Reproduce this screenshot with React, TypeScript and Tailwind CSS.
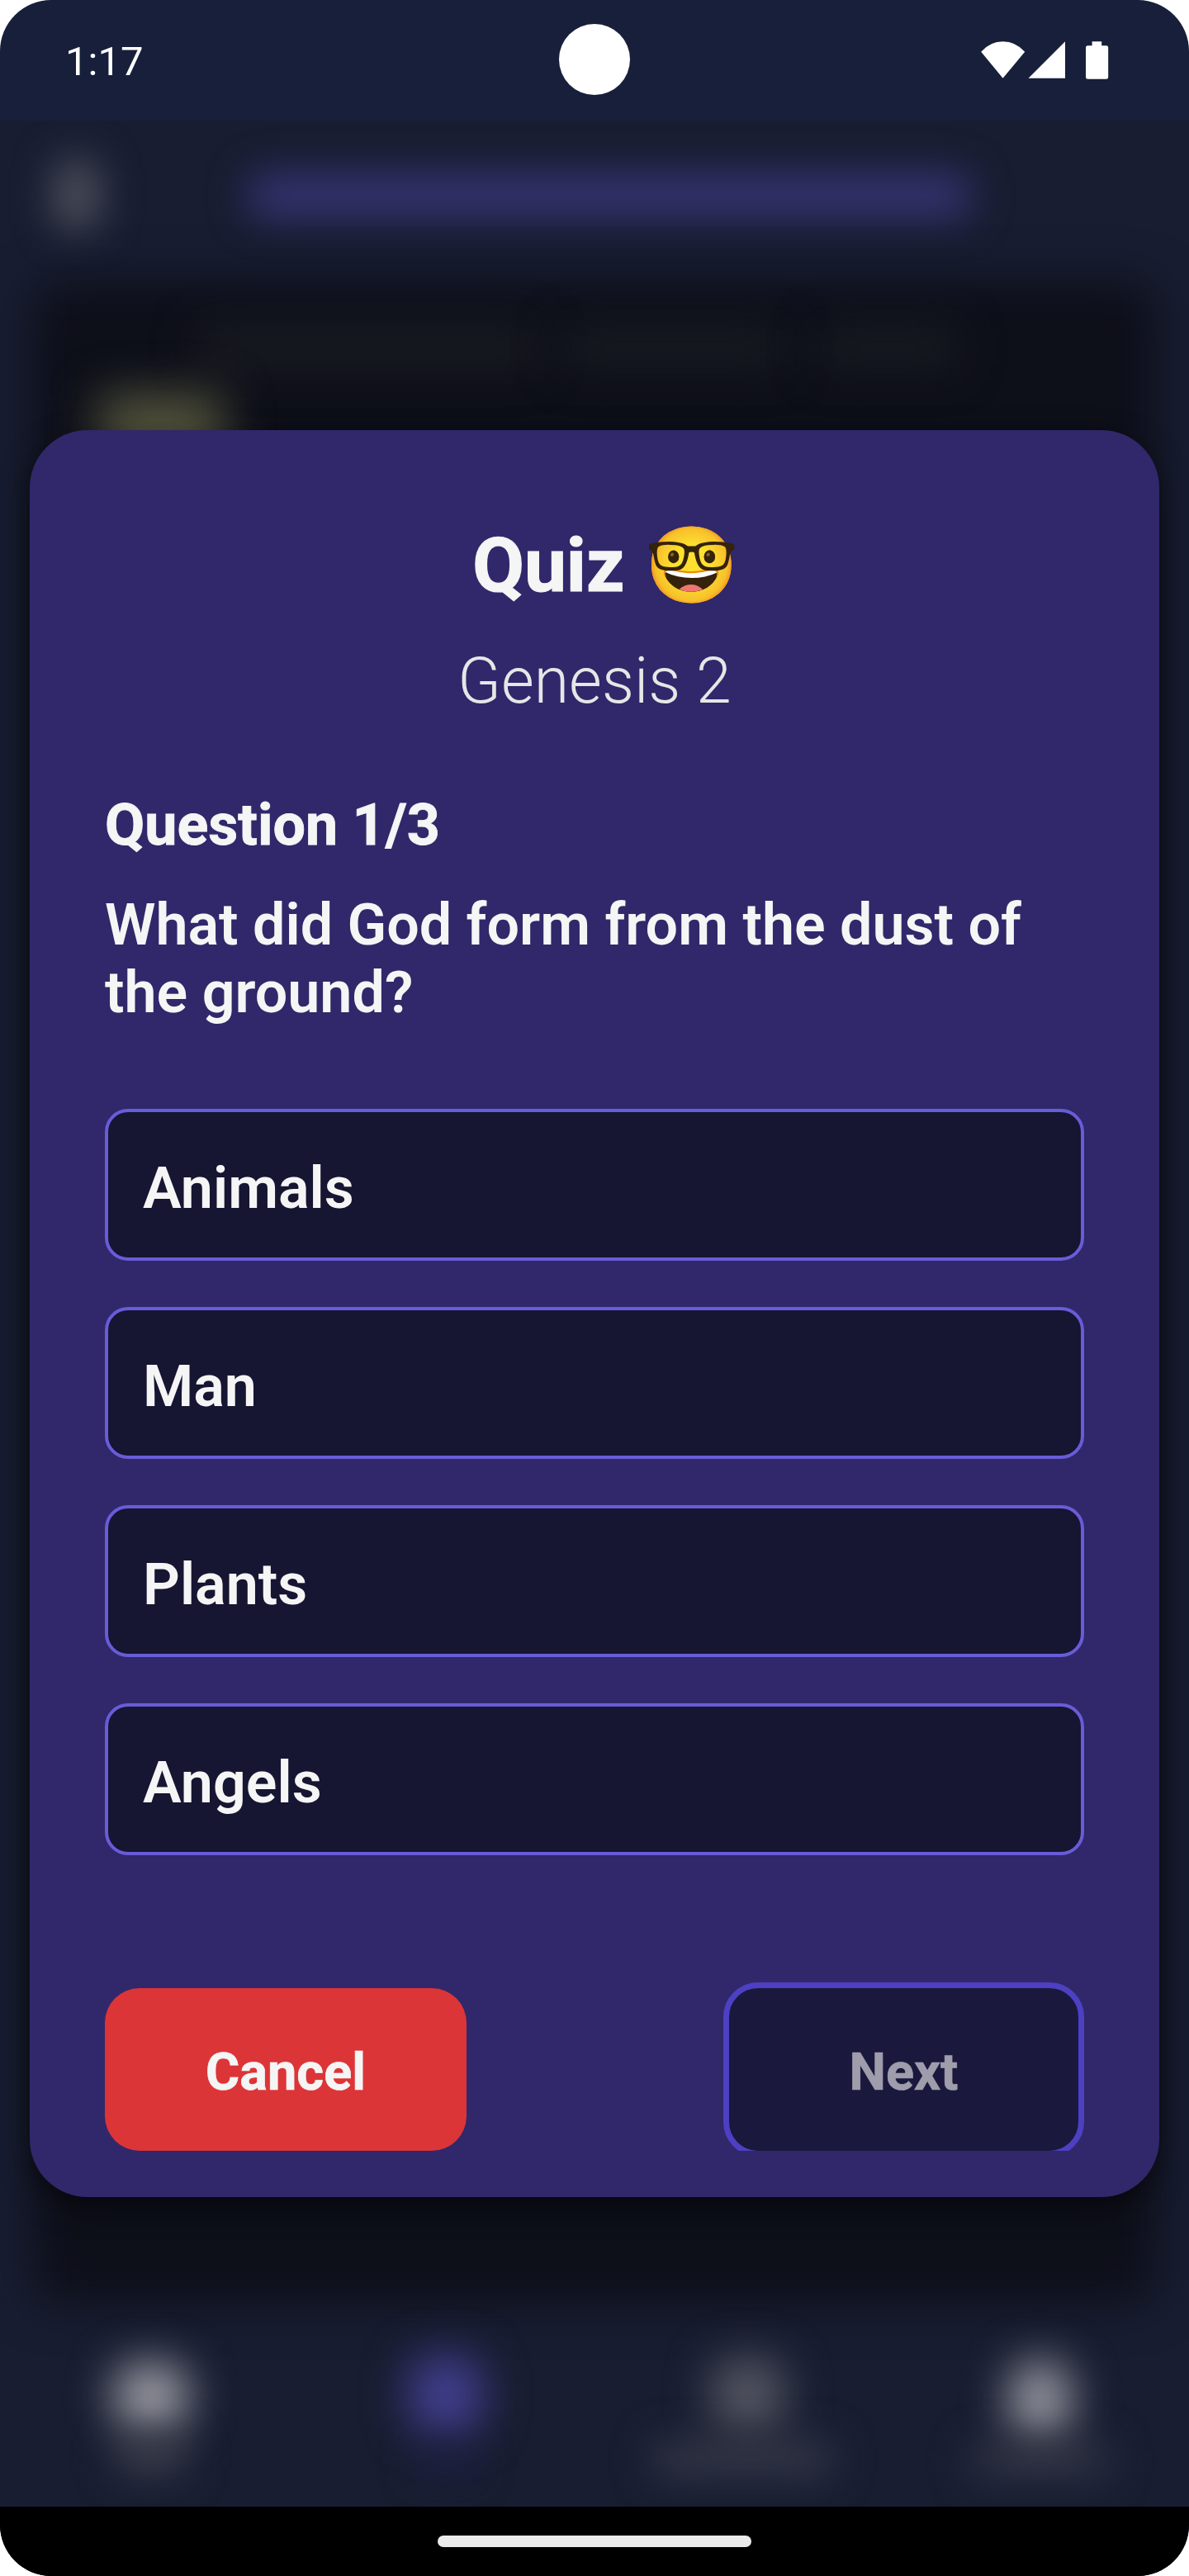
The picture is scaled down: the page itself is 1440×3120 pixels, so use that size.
const answers = ["Animals", "Man", "Plants", "Angels"];

function StatusIcons() {
  return (
    <svg className="h-[50px] w-[160px]" viewBox="0 0 160 50" fill="#fff">
      <path d="M0.2 14.7 Q11 2.2 26.6 2.2 Q42 2.2 53.2 14.7 L26.6 46.8 Z" />
      <path d="M57.5 46.7 L102 2.2 V46.7 Z" />
      <path d="M134.6 2.2 h11.6 v5 h5.6 a2.4 2.4 0 0 1 2.4 2.4 v35.8 a2.4 2.4 0 0 1 -2.4 2.4 h-22.4 a2.4 2.4 0 0 1 -2.4 -2.4 v-35.8 a2.4 2.4 0 0 1 2.4 -2.4 h5.2 z" />
    </svg>
  );
}

function BlurredPage() {
  return (
    <div className="flex h-[2890px] flex-col overflow-hidden bg-[#181d31]">
      <div className="flex h-[194px] shrink-0 items-center pl-[68px]">
        <div className="mt-[-14px] h-[84px] w-[50px] rounded-[20px] bg-[#555762] blur-[25px]" />
        <div className="mt-[-12px] ml-[182px] h-[54px] w-[876px] rounded-[20px] bg-[#363372] blur-[24px]" />
      </div>
      <div className="relative h-[2450px] shrink-0">
        <div className="mx-[40px] h-full rounded-[30px] bg-[#0d0f19] blur-[28px]" />
        <div className="absolute top-[58px] left-[240px] h-[46px] w-[410px] bg-[#1b1d22] blur-[26px]" />
        <div className="absolute top-[58px] left-[680px] h-[46px] w-[270px] bg-[#191c21] blur-[26px]" />
        <div className="absolute top-[58px] left-[990px] h-[46px] w-[170px] bg-[#191c21] blur-[26px]" />
        <div className="absolute top-[138px] left-[120px] h-[90px] w-[150px] bg-[#54543c] blur-[28px]" />
      </div>
      <div className="grid h-[246px] shrink-0 grid-cols-4">
        <div className="flex flex-col items-center pt-[72px] pl-[6px]">
          <div className="h-[82px] w-[90px] rounded-[34px] bg-[#a0a1a8] blur-[27px]" />
          <div className="mt-[10px] h-[40px] w-[84px] bg-[#3d3f4c] blur-[24px]" />
        </div>
        <div className="flex flex-col items-center pt-[64px]">
          <div className="h-[94px] w-[86px] rounded-[24px] bg-[#434092] blur-[27px]" />
          <div className="mt-[18px] h-[30px] w-[70px] bg-[#1f1e42] blur-[22px]" />
        </div>
        <div className="flex flex-col items-center pt-[68px]">
          <div className="ml-[12px] h-[86px] w-[84px] rounded-[20px] bg-[#575964] blur-[27px]" />
          <div className="mt-[14px] h-[40px] w-[216px] bg-[#363948] blur-[24px]" />
        </div>
        <div className="flex flex-col items-center pt-[70px]">
          <div className="h-[94px] w-[72px] rounded-[30px] bg-[#9c9da5] blur-[27px]" />
          <div className="mt-[8px] h-[36px] w-[168px] bg-[#343746] blur-[24px]" />
        </div>
      </div>
    </div>
  );
}

function QuizModal() {
  return (
    <div className="absolute top-[521px] left-[36px] flex h-[2140px] w-[1368px] flex-col rounded-[70px] bg-[#30286a] px-[91px] pt-[110px] text-[#f5f5f5] shadow-[0_12px_34px_rgba(0,0,0,0.5)]">
      <h1 className="h-[108px] pl-[26px] text-center text-[91px] leading-[108px] font-bold whitespace-nowrap [word-spacing:2px] [-webkit-text-stroke:1.2px_#f5f5f5]">
        Quiz 🤓
      </h1>
      <h2 className="mt-[41px] text-center text-[77px] leading-[90px] font-light text-[#e6e6e6]">Genesis 2</h2>
      <p className="mt-[88px] text-[70px] leading-[82px] font-bold [-webkit-text-stroke:0.8px_#f5f5f5]">Question 1/3</p>
      <p className="mt-[39px] text-[70px] leading-[82px] font-semibold">
        What did God form from the dust of
        <br />
        the ground?
      </p>
      <div className="mt-[100px] flex flex-col gap-[56px]">
        {answers.map((answer) => (
          <button
            key={answer}
            className="flex h-[184px] items-center rounded-[28px] border-[4px] border-[#695cd8] bg-[#161532] px-[42px] pt-[8px] text-[70px] leading-[82px] font-semibold"
          >
            {answer}
          </button>
        ))}
      </div>
      <div className="mt-[154px] flex h-[204px] justify-between overflow-hidden text-[63px] font-bold">
        <button className="mt-[7px] h-[197px] w-[438px] rounded-[42px] bg-[#dc3538] pt-[7px] [-webkit-text-stroke:0.7px_#f5f5f5]">
          Cancel
        </button>
        <button className="h-[211px] w-[437px] shrink-0 rounded-[42px] border-[7px] border-[#4d40c3] bg-[#1a183c] pt-[7px] text-[#9f9dac] [-webkit-text-stroke:0.7px_#9f9dac]">
          Next
        </button>
      </div>
    </div>
  );
}

export default function App() {
  return (
    <div className="h-[3120px] w-[1440px] bg-white font-['Roboto',sans-serif]">
      <div className="relative flex h-full flex-col overflow-hidden rounded-[62px] bg-[#171f3a]">
        <header className="relative flex h-[146px] shrink-0 items-start justify-between pr-[92px] pl-[79px]">
          <span className="mt-[46px] text-[49px] leading-[58px] text-white">1:17</span>
          <div className="absolute top-[29px] left-[677px] size-[86px] rounded-full bg-white" />
          <div className="mt-[48px]">
            <StatusIcons />
          </div>
        </header>
        <BlurredPage />
        <footer className="flex h-[84px] shrink-0 justify-center bg-black pt-[35px]">
          <div className="h-[14px] w-[380px] rounded-full bg-[#ebebeb]" />
        </footer>
        <QuizModal />
      </div>
    </div>
  );
}
